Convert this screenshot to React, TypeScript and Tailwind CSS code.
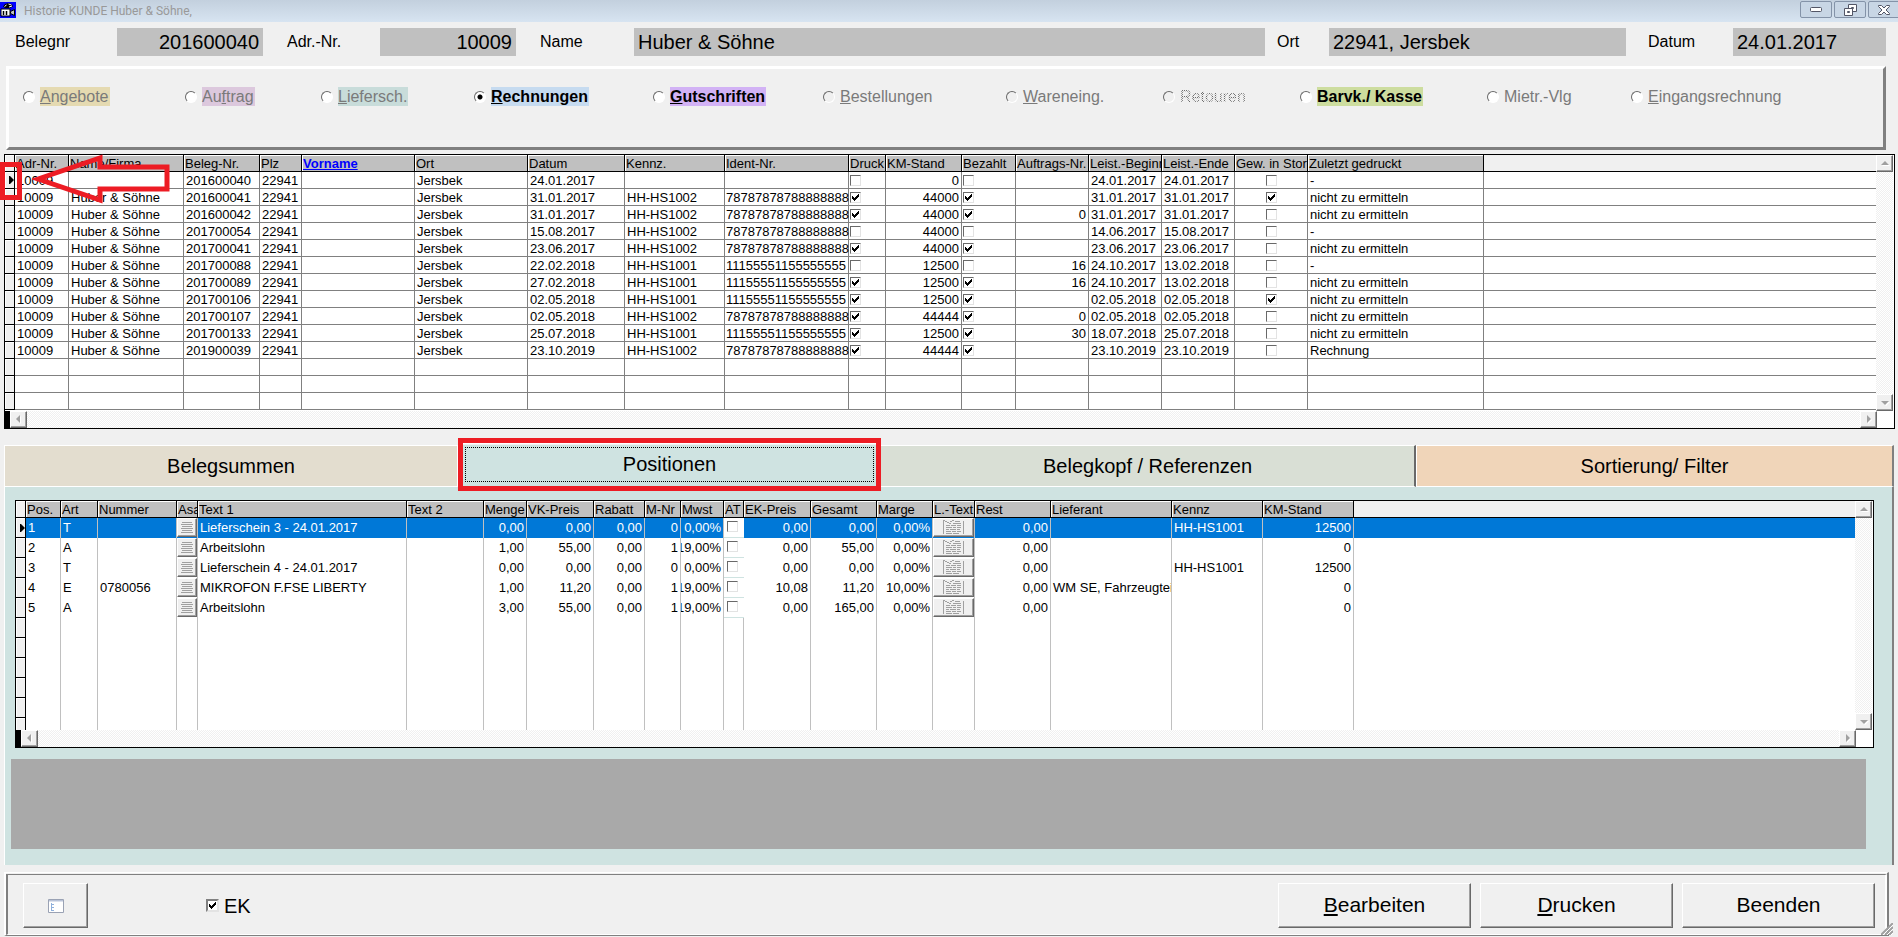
import clsx from "clsx";
import type { ReactNode } from "react";

type InvoiceRow = {
  name: string;
  beleg: string;
  datum: string;
  kennz: string;
  ident: string;
  druck: boolean;
  km: string;
  bezahlt: boolean;
  auftrag: string;
  beginn: string;
  ende: string;
  storno: boolean;
  gedruckt: string;
};

type PositionRow = {
  art: string;
  nummer: string;
  text: string;
  menge: string;
  vk: string;
  mnr: string;
  mwst: string;
  ek: string;
  gesamt: string;
  marge: string;
  lieferant: string;
  kennz: string;
  km: string;
};

const H = "Huber & Söhne";
const ID1 = "11155551155555555";
const ID2 = "78787878788888888";
const NE = "nicht zu ermitteln";

const invoices: InvoiceRow[] = [
  { name: "", beleg: "201600040", datum: "24.01.2017", kennz: "", ident: "", druck: false, km: "0", bezahlt: false, auftrag: "", beginn: "24.01.2017", ende: "24.01.2017", storno: false, gedruckt: "-" },
  { name: H, beleg: "201600041", datum: "31.01.2017", kennz: "HH-HS1002", ident: ID2, druck: true, km: "44000", bezahlt: true, auftrag: "", beginn: "31.01.2017", ende: "31.01.2017", storno: true, gedruckt: NE },
  { name: H, beleg: "201600042", datum: "31.01.2017", kennz: "HH-HS1002", ident: ID2, druck: true, km: "44000", bezahlt: true, auftrag: "0", beginn: "31.01.2017", ende: "31.01.2017", storno: false, gedruckt: NE },
  { name: H, beleg: "201700054", datum: "15.08.2017", kennz: "HH-HS1002", ident: ID2, druck: false, km: "44000", bezahlt: false, auftrag: "", beginn: "14.06.2017", ende: "15.08.2017", storno: false, gedruckt: "-" },
  { name: H, beleg: "201700041", datum: "23.06.2017", kennz: "HH-HS1002", ident: ID2, druck: true, km: "44000", bezahlt: true, auftrag: "", beginn: "23.06.2017", ende: "23.06.2017", storno: false, gedruckt: NE },
  { name: H, beleg: "201700088", datum: "22.02.2018", kennz: "HH-HS1001", ident: ID1, druck: false, km: "12500", bezahlt: false, auftrag: "16", beginn: "24.10.2017", ende: "13.02.2018", storno: false, gedruckt: "-" },
  { name: H, beleg: "201700089", datum: "27.02.2018", kennz: "HH-HS1001", ident: ID1, druck: true, km: "12500", bezahlt: true, auftrag: "16", beginn: "24.10.2017", ende: "13.02.2018", storno: false, gedruckt: NE },
  { name: H, beleg: "201700106", datum: "02.05.2018", kennz: "HH-HS1001", ident: ID1, druck: true, km: "12500", bezahlt: true, auftrag: "", beginn: "02.05.2018", ende: "02.05.2018", storno: true, gedruckt: NE },
  { name: H, beleg: "201700107", datum: "02.05.2018", kennz: "HH-HS1002", ident: ID2, druck: true, km: "44444", bezahlt: true, auftrag: "0", beginn: "02.05.2018", ende: "02.05.2018", storno: false, gedruckt: NE },
  { name: H, beleg: "201700133", datum: "25.07.2018", kennz: "HH-HS1001", ident: ID1, druck: true, km: "12500", bezahlt: true, auftrag: "30", beginn: "18.07.2018", ende: "25.07.2018", storno: false, gedruckt: NE },
  { name: H, beleg: "201900039", datum: "23.10.2019", kennz: "HH-HS1002", ident: ID2, druck: true, km: "44444", bezahlt: true, auftrag: "", beginn: "23.10.2019", ende: "23.10.2019", storno: false, gedruckt: "Rechnung" },
];

const positions: PositionRow[] = [
  { art: "T", nummer: "", text: "Lieferschein 3 - 24.01.2017", menge: "0,00", vk: "0,00", mnr: "0", mwst: "0,00%", ek: "0,00", gesamt: "0,00", marge: "0,00%", lieferant: "", kennz: "HH-HS1001", km: "12500" },
  { art: "A", nummer: "", text: "Arbeitslohn", menge: "1,00", vk: "55,00", mnr: "1", mwst: "19,00%", ek: "0,00", gesamt: "55,00", marge: "0,00%", lieferant: "", kennz: "", km: "0" },
  { art: "T", nummer: "", text: "Lieferschein 4 - 24.01.2017", menge: "0,00", vk: "0,00", mnr: "0", mwst: "0,00%", ek: "0,00", gesamt: "0,00", marge: "0,00%", lieferant: "", kennz: "HH-HS1001", km: "12500" },
  { art: "E", nummer: "0780056", text: "MIKROFON F.FSE LIBERTY", menge: "1,00", vk: "11,20", mnr: "1", mwst: "19,00%", ek: "10,08", gesamt: "11,20", marge: "10,00%", lieferant: "WM SE, Fahrzeugteile", kennz: "", km: "0" },
  { art: "A", nummer: "", text: "Arbeitslohn", menge: "3,00", vk: "55,00", mnr: "1", mwst: "19,00%", ek: "0,00", gesamt: "165,00", marge: "0,00%", lieferant: "", kennz: "", km: "0" },
];

const invoiceHeads = ["Adr-Nr.", "Name/Firma", "Beleg-Nr.", "Plz", "Vorname", "Ort", "Datum", "Kennz.", "Ident-Nr.", "Druck", "KM-Stand", "Bezahlt", "Auftrags-Nr.", "Leist.-Beginn", "Leist.-Ende", "Gew. in Storno", "Zuletzt gedruckt"];
const invoiceWidths = [10, 54, 115, 76, 42, 113, 113, 97, 100, 124, 37, 76, 54, 73, 73, 73, 73, 176];

const positionHeads = ["Pos.", "Art", "Nummer", "Asa", "Text 1", "Text 2", "Menge", "VK-Preis", "Rabatt", "M-Nr", "Mwst", "AT", "EK-Preis", "Gesamt", "Marge", "L.-Text", "Rest", "Lieferant", "Kennz", "KM-Stand"];
const positionWidths = [10, 35, 37, 79, 21, 209, 77, 43, 67, 51, 36, 43, 20, 67, 66, 56, 42, 76, 121, 91, 91];

const raised =
  "border border-t-white border-l-white border-r-[#696969] border-b-[#696969] bg-[#f0f0f0] shadow-[inset_-1px_-1px_#a0a0a0]";

function Tick({ size }: { readonly size: 11 | 13 }) {
  return (
    <svg
      className="pointer-events-none [grid-area:1/1]"
      width={size}
      height={size}
      viewBox={size === 11 ? "-2 -2 11 11" : "-3 -3 13 13"}
      shapeRendering="crispEdges"
      aria-hidden="true"
    >
      <path d="M0 2h1v3h-1zM1 3h1v3h-1zM2 4h1v3h-1zM3 3h1v3h-1zM4 2h1v3h-1zM5 1h1v3h-1zM6 0h1v3h-1z" />
    </svg>
  );
}

function CellCheck({ checked, label }: { readonly checked: boolean; readonly label: string }) {
  return (
    <span className="inline-grid align-top">
      <input
        type="checkbox"
        defaultChecked={checked}
        aria-label={label}
        className="m-0 size-[11px] appearance-none border border-t-[#696969] border-r-[#e3e3e3] border-b-[#e3e3e3] border-l-[#696969] bg-white [grid-area:1/1]"
      />
      {checked ? <Tick size={11} /> : null}
    </span>
  );
}

function ScrollButton({ dir }: { readonly dir: "up" | "down" | "left" | "right" }) {
  const shapes = {
    up: "M4 9h8L8 5z",
    down: "M4 6h8l-4 4z",
    left: "M9 3v8L5 7z",
    right: "M6 3v8l4-4z",
  };
  return (
    <button type="button" aria-label={`Scroll ${dir}`} className={clsx("size-[17px] shrink-0", raised)}>
      <svg width="15" height="15" viewBox="0 0 15 15" aria-hidden="true">
        <path d={shapes[dir]} fill="#fff" transform="translate(1 1)" />
        <path d={shapes[dir]} fill="#a0a0a0" />
      </svg>
    </button>
  );
}

const track = "bg-[image:repeating-conic-gradient(#fff_0_25%,#f0f0f0_0_50%)] bg-[length:2px_2px]";

function Grid({ children }: { readonly children: ReactNode }) {
  return (
    <div className="border border-black bg-white">
      <div className="flex pr-px">
        <div className="min-w-0 flex-1 overflow-hidden">{children}</div>
        <div className={clsx("flex w-[17px] flex-col justify-between", track)}>
          <ScrollButton dir="up" />
          <ScrollButton dir="down" />
        </div>
      </div>
      <div className="flex bg-black pl-[5px]">
        <div className={clsx("flex flex-1 justify-between", track)}>
          <ScrollButton dir="left" />
          <ScrollButton dir="right" />
        </div>
        <div className="w-[17px] bg-white" />
      </div>
    </div>
  );
}

function Cols({ widths }: { readonly widths: number[] }) {
  return (
    <colgroup>
      {widths.map((w, i) => (
        <col key={i} style={{ width: w }} />
      ))}
      <col />
    </colgroup>
  );
}

function Head({ names }: { readonly names: string[] }) {
  return (
    <thead className="leading-[15px]">
      <tr className="h-[17px]">
        <th className="border-r border-b border-black bg-[#f0f0f0] p-0 shadow-[inset_1px_1px_#fff]" aria-label="Auswahl" />
        {names.map((name) => (
          <th
            key={name}
            scope="col"
            className="overflow-hidden border-r border-b border-black bg-[#c0c0c0] p-0 pt-px pl-px text-left font-normal shadow-[inset_1px_1px_#fff]"
          >
            {name === "Vorname" ? (
              <a href="#vorname" className="font-bold text-[#0000ff] underline">
                {name}
              </a>
            ) : (
              name
            )}
          </th>
        ))}
        <th className="border-b border-black bg-[#f0f0f0] p-0" aria-label="Leer" />
      </tr>
    </thead>
  );
}

function RowMark({ active }: { readonly active: boolean }) {
  return (
    <td className="border-r border-b border-black bg-[#f0f0f0] p-0 shadow-[inset_1px_1px_#fff]">
      {active ? (
        <svg className="ml-auto block" width="5" height="8" viewBox="0 0 5 8" aria-hidden="true">
          <path d="M0 0h1l4 4-4 4H0z" />
        </svg>
      ) : null}
    </td>
  );
}

function InvoiceTable() {
  const cell = "overflow-hidden border-r border-b border-[#808080] p-0 pt-px pl-[2px]";
  const num = "overflow-hidden border-r border-b border-[#808080] p-0 pt-px pr-[2px] text-right";
  const box = "overflow-hidden border-r border-b border-[#808080] p-0 pt-[3px] pl-px align-top leading-none";
  const filler = [0, 1, 2];
  return (
    <table className="w-full table-fixed border-separate border-spacing-0 pb-px text-[13px] leading-[15px] whitespace-nowrap">
      <Cols widths={invoiceWidths} />
      <Head names={invoiceHeads} />
      <tbody>
        {invoices.map((r, i) => (
          <tr key={r.beleg} className="h-[17px]">
            <RowMark active={i === 0} />
            <td className={cell}>10009</td>
            <td className={cell}>{r.name}</td>
            <td className={cell}>{r.beleg}</td>
            <td className={cell}>22941</td>
            <td className={cell} />
            <td className={cell}>Jersbek</td>
            <td className={cell}>{r.datum}</td>
            <td className={cell}>{r.kennz}</td>
            <td className="border-r border-b border-[#808080] p-0 pt-px pl-px">{r.ident}</td>
            <td className={box}><CellCheck checked={r.druck} label="Druck" /></td>
            <td className={num}>{r.km}</td>
            <td className={box}><CellCheck checked={r.bezahlt} label="Bezahlt" /></td>
            <td className={num}>{r.auftrag}</td>
            <td className={cell}>{r.beginn}</td>
            <td className={cell}>{r.ende}</td>
            <td className={clsx(box, "text-center")}><CellCheck checked={r.storno} label="Gew. in Storno" /></td>
            <td className={cell}>{r.gedruckt}</td>
            <td className="border-b border-[#808080] p-0" />
          </tr>
        ))}
        {filler.map((f) => (
          <tr key={f} className="h-[17px]">
            <RowMark active={false} />
            {invoiceHeads.map((name) => (
              <td key={name} className={cell} />
            ))}
            <td className="border-b border-[#808080] p-0" />
          </tr>
        ))}
      </tbody>
    </table>
  );
}

function LinesIcon() {
  return (
    <svg width="12" height="12" viewBox="0 0 12 12" shapeRendering="crispEdges" aria-hidden="true">
      <path d="M1 .5h10M0 2.500h12M1 4.500h10M0 6.500h12M1 8.500h10M0 10.500h12" stroke="#a0a0a0" />
    </svg>
  );
}

function NoteIcon() {
  return (
    <svg width="22" height="15" viewBox="0 0 22 15" shapeRendering="crispEdges" aria-hidden="true">
      <path d="M.5 1v13M20.5 1v13M0 .5h2M2 1.500h2M4 2.500h2M6 3.500h2M7 1.500h2M9 .500h2M12 1.500h5M10 3.500h8" stroke="#a0a0a0" fill="none" />
      <path d="M3 5.500h4m1 0h5m1 0h4M3 7.500h6m1 0h3m1 0h4M3 9.500h3m1 0h6m1 0h3M3 11.500h5m1 0h4m1 0h4M3 13.500h6m1 0h6" stroke="#a0a0a0" />
    </svg>
  );
}

function PositionTable() {
  const cell = "overflow-hidden border-r border-[#c0c0c0] p-0 pl-[2px]";
  const num = "overflow-hidden border-r border-[#c0c0c0] p-0";
  const right = (value: string) => (
    <td className={num}>
      <div className="flex justify-end overflow-hidden pr-[2px]">{value}</div>
    </td>
  );
  const filler = [0, 1, 2, 3, 4, 5];
  return (
    <table className="w-full table-fixed border-separate border-spacing-0 text-[13px] leading-[16px] whitespace-nowrap">
      <Cols widths={positionWidths} />
      <Head names={positionHeads} />
      <tbody>
        {positions.map((r, i) => (
          <tr key={i} className={clsx("h-5", i === 0 && "bg-[#0078d7] text-white")}>
            <RowMark active={i === 0} />
            <td className={cell}>{i + 1}</td>
            <td className={cell}>{r.art}</td>
            <td className={cell}>{r.nummer}</td>
            <td className="border-r border-[#c0c0c0] p-0 align-top">
              <button type="button" aria-label="Asa" className={clsx("flex h-[19px] w-full items-center justify-center", raised)}>
                <LinesIcon />
              </button>
            </td>
            <td className={cell}>{r.text}</td>
            <td className={cell} />
            {right(r.menge)}
            {right(r.vk)}
            {right("0,00")}
            {right(r.mnr)}
            {right(r.mwst)}
            <td className="border-b border-[#cfe3e1] bg-white p-0 pt-[3px] pl-[3px] align-top leading-none">
              <CellCheck checked={false} label="AT" />
            </td>
            {right(r.ek)}
            {right(r.gesamt)}
            {right(r.marge)}
            <td className="border-r border-[#c0c0c0] p-0 align-top">
              <button type="button" aria-label="L.-Text" className={clsx("flex h-[19px] w-full items-center justify-center", raised)}>
                <NoteIcon />
              </button>
            </td>
            {right("0,00")}
            <td className={cell}>{r.lieferant}</td>
            <td className={cell}>{r.kennz}</td>
            {right(r.km)}
            <td className="p-0" />
          </tr>
        ))}
        {filler.map((f) => (
          <tr key={f} className={f === 5 ? "h-3" : "h-5"}>
            <td
              className={clsx(
                "border-r border-black bg-[#f0f0f0] p-0 shadow-[inset_1px_1px_#fff]",
                f < 5 && "border-b",
              )}
            />
            {positionHeads.map((name) => (
              <td key={name} className="border-r border-[#c0c0c0] p-0" />
            ))}
            <td className="p-0" />
          </tr>
        ))}
      </tbody>
    </table>
  );
}

function TitleBar() {
  const button = "flex h-[17px] w-8 items-center justify-center rounded-xs border border-[#8493a8] bg-[#c8d6e5]";
  return (
    <header className="flex h-[22px] items-start overflow-hidden bg-linear-to-b from-[#c3d0de] to-[#d7e4f1]">
      <svg className="mt-[2px]" width="16" height="16" viewBox="0 0 16 16" aria-hidden="true">
        <path d="M0 0h16v16H0z" fill="#0000ff" />
        <path d="M3 4.500l2-2.500 4-1 3 1.500 1 2-3 1.500H5z" fill="#000" />
        <path d="M4.500 4.500l2-1.500M8.500 2l3 1M9 5l3-1" stroke="#fff" />
        <path d="M1 7h9v7H1z" fill="#fff" stroke="#000" />
        <path d="M3.500 9v4M6.500 9v4" stroke="#000" strokeWidth="1.500" />
        <path d="M10.500 9.500l4-2v6l-4-2z" fill="#c0c0c0" stroke="#000" />
      </svg>
      <h1 className="ml-2 flex-1 font-[Roboto,sans-serif] text-xs leading-[22px] text-[#999]">
        Historie KUNDE Huber &amp; Söhne,
      </h1>
      <div className="mt-px -mr-[2px] flex gap-[2px]">
        <button type="button" aria-label="Minimieren" className={button}>
          <svg width="12" height="6" viewBox="0 0 12 6" aria-hidden="true">
            <rect x=".5" y=".5" width="11" height="4" rx="1" fill="#fff" stroke="#535666" />
          </svg>
        </button>
        <button type="button" aria-label="Wiederherstellen" className={button}>
          <svg width="13" height="12" viewBox="0 0 13 12" aria-hidden="true">
            <path d="M4.500.500h8v7h-8z" fill="#fff" stroke="#535666" />
            <path d="M7.500 3.500h2v1h-2z" fill="none" stroke="#535666" />
            <path d="M.500 4.500h8v7h-8z" fill="#fff" stroke="#535666" />
            <path d="M3.500 7.500h2v1h-2z" fill="#c8d6e5" stroke="#535666" />
          </svg>
        </button>
        <button type="button" aria-label="Schließen" className={button}>
          <svg width="12" height="10" viewBox="0 0 12 10" aria-hidden="true">
            <path d="M.500.500h3L6 3 8.500.500h3v1L8 5l3.500 3.500v1h-3L6 7 3.500 9.500h-3v-1L4 5 .500 1.500z" fill="#fff" stroke="#535666" />
          </svg>
        </button>
      </div>
    </header>
  );
}

function HeaderFields() {
  const field = "h-7 w-full min-w-0 bg-[#c0c0c0] px-1 text-xl text-black outline-none";
  return (
    <section className="grid grid-cols-[102px_146px_117px_136px_118px_631fr_64px_297fr_107px_153px] items-center pt-[6px] pr-3 pl-[15px] text-base">
      <label htmlFor="belegnr">Belegnr</label>
      <input id="belegnr" readOnly value="201600040" className={clsx(field, "text-right")} />
      <label htmlFor="adrnr" className="pl-6">Adr.-Nr.</label>
      <input id="adrnr" readOnly value="10009" className={clsx(field, "text-right")} />
      <label htmlFor="name" className="pl-6">Name</label>
      <input id="name" readOnly value="Huber & Söhne" className={field} />
      <label htmlFor="ort" className="pl-3">Ort</label>
      <input id="ort" readOnly value="22941, Jersbek" className={field} />
      <label htmlFor="datum" className="pl-[22px]">Datum</label>
      <input id="datum" readOnly value="24.01.2017" className={field} />
    </section>
  );
}

const kinds = [
  { key: "A", rest: "ngebote", look: "bg-[#e5dab1] text-[#7a7a7a]" },
  { key: "Auf", rest: "trag", look: "bg-[#dcc8dd] text-[#7a7a7a]" },
  { key: "L", rest: "iefersch.", look: "bg-[#c8dcda] text-[#7a7a7a]" },
  { key: "R", rest: "echnungen", look: "bg-[#c6dbf0] font-bold" },
  { key: "G", rest: "utschriften", look: "bg-[#d2b2f5] font-bold" },
  { key: "B", rest: "estellungen", look: "text-[#7a7a7a]", flat: true },
  { key: "W", rest: "areneing.", look: "text-[#7a7a7a]", flat: true },
  { key: "", rest: "Retouren", look: "bg-[image:repeating-conic-gradient(#6d6d6d_0_25%,#f0f0f0_0_50%)] bg-[length:2px_2px] bg-clip-text text-transparent", flat: true },
  { key: "", rest: "Barvk./ Kasse", look: "bg-[#cddd9f] font-bold" },
  { key: "", rest: "Mietr.-Vlg", look: "text-[#7a7a7a]" },
  { key: "E", rest: "ingangsrechnung", look: "text-[#7a7a7a]" },
];

function KindPicker() {
  return (
    <fieldset className="mt-[10px] mr-3 ml-[6px] grid h-[84px] grid-cols-[162fr_136fr_153fr_179fr_170fr_183fr_157fr_137fr_187fr_144fr_252fr] border-[3px] border-t-white border-r-[#808080] border-b-[#808080] border-l-white pt-[18px] pl-[14px]">
      {kinds.map((k) => (
        <label key={k.rest} className="flex h-[19px] items-center gap-[5px] text-base leading-[19px] whitespace-nowrap">
          <input
            type="radio"
            name="belegart"
            defaultChecked={k.rest === "echnungen"}
            className={clsx(
              "m-0 size-3 shrink-0 appearance-none rounded-full border border-t-[#696969] border-r-white border-b-white border-l-[#696969] checked:bg-[image:radial-gradient(circle,#000_2px,transparent_3px)]",
              k.flat ? "bg-[#f0f0f0]" : "bg-white",
            )}
          />
          <span className={clsx("pr-px", k.look)}>
            {k.key === "Auf" ? (
              <>
                Au<u>f</u>
              </>
            ) : (
              <u>{k.key}</u>
            )}
            {k.rest}
          </span>
        </label>
      ))}
    </fieldset>
  );
}

function Tabs() {
  const tab = "h-[42px] border-t border-b border-white text-xl";
  return (
    <nav className="grid grid-cols-[454fr_423fr_535fr_478fr]">
      <button type="button" className={clsx(tab, "border-r border-l bg-[#e3ddcf]")}>Belegsummen</button>
      <div className="relative bg-[#cfe3e1]">
        <button type="button" className="h-[42px] w-full pb-1 text-xl">Positionen</button>
        {/* focus rectangle and red marker of the open tab */}
        <div className="pointer-events-none absolute inset-x-0 -top-[7px] -bottom-1 border-[5px] border-[#ed1c24]">
          <div className="h-full border-t border-white px-[2px] pt-[3px] pb-1">
            <div className="h-full border border-dotted border-black" />
          </div>
        </div>
      </div>
      <button type="button" className={clsx(tab, "border-r-2 border-r-[#696969] bg-[#d9dfd5]")}>
        Belegkopf / Referenzen
      </button>
      <button type="button" className={clsx(tab, "border-r-2 border-l border-r-[#808080] bg-[#f0d5b9]")}>
        Sortierung/ Filter
      </button>
    </nav>
  );
}

function Footer() {
  const button = clsx("h-[45px] w-[193px] pb-[2px] text-[21px]", raised);
  return (
    <footer className="relative mt-[7px] mr-[9px] ml-1 border-t border-r-2 border-b border-l-2 border-t-white border-r-[#808080] border-b-[#808080] border-l-white pt-px">
      <div className="flex items-center border-t border-r-2 border-b border-l-2 border-t-[#808080] border-r-white border-b-white border-l-[#808080] pt-2 pr-[10px] pb-[6px] pl-[15px]">
        <button type="button" aria-label="Liste" className={clsx("flex h-[45px] w-[65px] items-center justify-center", raised)}>
          <svg width="16" height="14" viewBox="0 0 16 14" aria-hidden="true">
            <path d="M.500.500h15v13H.500z" fill="#fff" stroke="#9aa2b4" />
            <path d="M1 1h14v1.500H1z" fill="#b9c3d8" />
            <path d="M3.500 4v8M3 5.500h3M3 8.500h3M3 11.500h3" stroke="#8fb0dc" />
          </svg>
        </button>
        <label className="ml-[118px] flex items-center gap-[5px] text-xl">
          <span className="inline-grid">
            <input
              type="checkbox"
              defaultChecked
              className="m-0 size-[13px] appearance-none border-2 border-t-[#808080] border-r-[#e3e3e3] border-b-[#e3e3e3] border-l-[#808080] bg-white [grid-area:1/1]"
            />
            <Tick size={13} />
          </span>
          EK
        </label>
        <div className="ml-auto flex gap-[9px]">
          <button type="button" className={button}>
            <u>B</u>earbeiten
          </button>
          <button type="button" className={button}>
            <u>D</u>rucken
          </button>
          <button type="button" className={button}>Beenden</button>
        </div>
      </div>
      <svg className="absolute -right-[6px] bottom-0" width="12" height="12" viewBox="0 0 12 12" aria-hidden="true">
        <path d="M0 12L12 0M4 12l8-8M8 12l4-4" stroke="#a0a0a0" strokeWidth="2" />
        <path d="M2 12L12 2M6 12l6-6M10 12l2-2" stroke="#fff" />
      </svg>
    </footer>
  );
}

export default function App() {
  return (
    <div className="min-h-screen bg-[#f0f0f0] font-['Liberation_Sans',Arial,sans-serif] text-black">
      <TitleBar />
      <HeaderFields />
      <KindPicker />

      <section className="relative mt-1 mr-[3px] ml-1">
        <Grid>
          <InvoiceTable />
        </Grid>
        {/* red marker on the active row */}
        <div className="pointer-events-none absolute top-2 -left-1 h-[38px] w-[22px] border-[5px] border-[#ed1c24]" />
        <svg className="pointer-events-none absolute top-0 left-7" width="140" height="50" viewBox="32 154 140 50" aria-hidden="true">
          <path d="M38 179L100 158v9h67v22h-67v11z" fill="none" stroke="#ed1c24" strokeWidth="5" />
        </svg>
      </section>

      <main className="mt-4 mr-1 ml-1">
        <Tabs />
        <div className="border-r-2 border-l border-r-[#808080] border-l-white bg-[#cfe3e1] pt-[13px] pb-4">
          <div className="mr-[18px] ml-[10px]">
            <Grid>
              <PositionTable />
            </Grid>
          </div>
          <div className="mt-[11px] mr-[26px] ml-[6px] h-[90px] bg-[#a9a9a9]" />
        </div>
      </main>

      <Footer />
    </div>
  );
}
